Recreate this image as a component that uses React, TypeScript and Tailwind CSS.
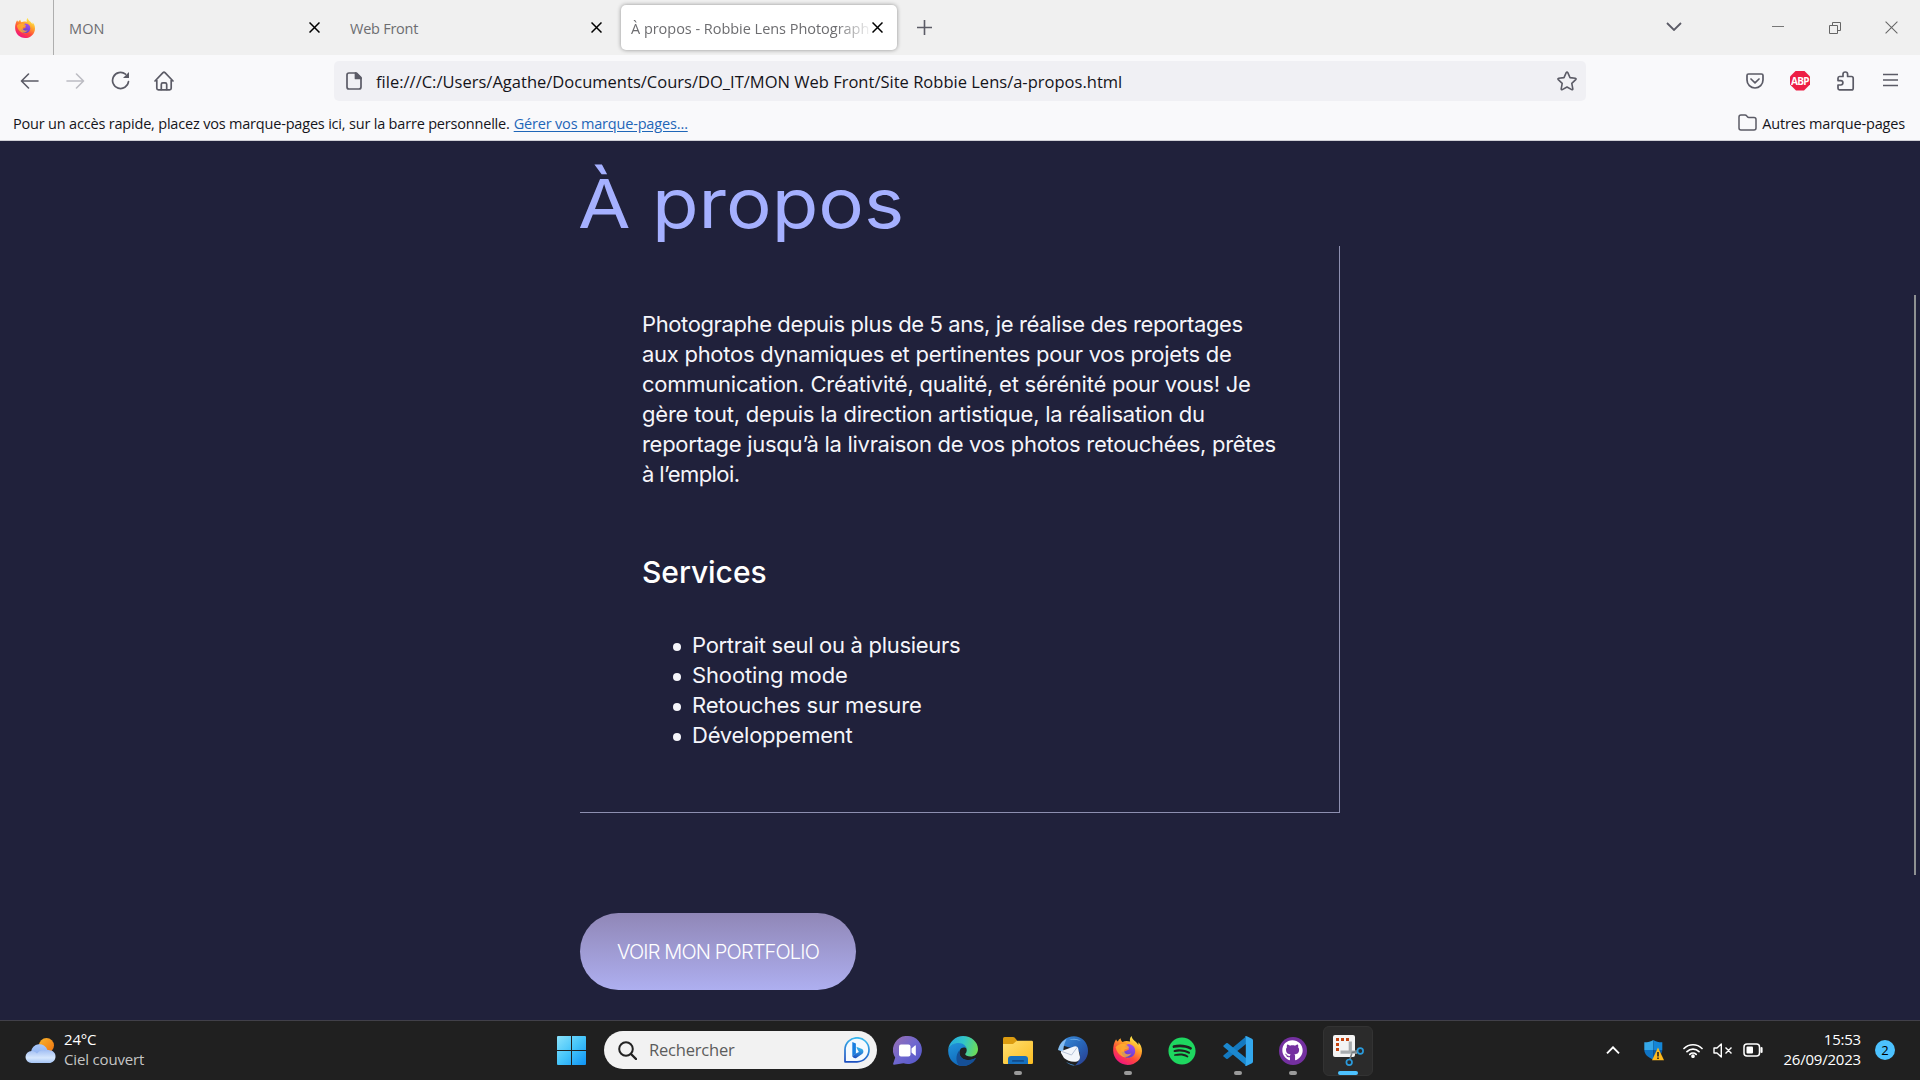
import type { ReactNode } from "react";
import { FaGithub, FaSpotify } from "react-icons/fa";

function Cross({ size = 11, className = "", width = 1.5 }: { size?: number; className?: string; width?: number }) {
  return (
    <svg width={size} height={size} viewBox="0 0 11 11" className={className} fill="none" stroke="currentColor" strokeWidth={width}>
      <path d="M.5.5l10 10M10.500.5l-10 10" />
    </svg>
  );
}

function FirefoxLogo({ size, id }: { size: number; id: string }) {
  return (
    <svg width={size} height={size} viewBox="0 0 32 32">
      <defs>
        <linearGradient id={id + "a"} x1="0.8" y1="0.05" x2="0.25" y2="0.95">
          <stop offset="0" stopColor="#fff44f" />
          <stop offset="0.35" stopColor="#ffa02a" />
          <stop offset="0.65" stopColor="#ff4a3d" />
          <stop offset="1" stopColor="#f0147e" />
        </linearGradient>
        <linearGradient id={id + "b"} x1="0.7" y1="0" x2="0.3" y2="1">
          <stop offset="0" stopColor="#a34ff0" />
          <stop offset="1" stopColor="#5a3bc8" />
        </linearGradient>
      </defs>
      <path
        fill={"url(#" + id + "a)"}
        d="M20.500 0c-1.800 1.700-2.300 4-1.600 6.200-2.800-1-6-.9-8.400.4-1.300-.9-2-2.300-2.100-4C6.900 3.500 6 4.600 5.400 6 4.400 5.600 3.700 4.700 3.400 3.600 1.200 7 0 11.500.2 16.400.5 25.200 7.500 32 16.200 32 25 32 32 25.300 32 16.600c0-4.200-1.600-7.700-4-9.800.2 1.200.1 2.200-.2 3C25.800 5.600 21.200 4.900 20.500 0z"
      />
      <circle cx="16.200" cy="17" r="7.600" fill="#ff7a35" />
      <path fill={"url(#" + id + "b)"} d="M17 8.700c4.600.4 7.700 3.600 7.500 8-.2 4.300-3.700 7.400-8 7.300-4.200-.1-7.300-3.200-7.300-7 3.600 1 5-.4 7.200-1.500 1-.5 1.600-1 1.200-1.700-.7-1.100-3-.4-4.600-1.600 1-1.900 2.300-3 4-3.500z" />
      <path fill="#ffb52e" d="M2.800 12.500c3-3.600 7-4.700 10.800-3.300 1.800.6 2.700 1.800 4.300 3.100-1.500 1.700-3.200 1.700-4.600 2.200-1.400.6-1.300 2.600-.3 4 1.600 2.200 5 2.200 7.500.6-2 3.600-6.200 5.200-10.300 3.500C6 20.800 4 17 2.800 12.500z" opacity="0.75" />
    </svg>
  );
}

function Tabs() {
  return (
    <div className="flex h-[55px] items-center bg-[#f0f0f0] text-[14.5px] leading-5 text-[#6d6d70]">
      <div className="flex h-full w-[54px] items-center border-r border-[#aeaeae] pl-[15px]">
        <FirefoxLogo size={20} id="ft" />
      </div>
      <div className="flex w-[281px] items-center justify-between pl-[15px] pr-[15px]">
        <span className="pt-[3px] tracking-[0.1px]">MON</span>
        <Cross className="text-black" />
      </div>
      <div className="flex w-[286px] items-center justify-between pl-[15px] pr-[19px]">
        <span className="pt-[3px] tracking-[-0.25px]">Web Front</span>
        <Cross className="text-black" />
      </div>
      <div className="flex h-[45px] w-[276px] items-center justify-between rounded-[5px] bg-white pl-[10px] pr-[14px] shadow-[0_0_4px_rgba(0,0,0,0.4)]">
        <span className="w-[238px] overflow-hidden whitespace-nowrap pt-[3px] tracking-[-0.03px] [mask-image:linear-gradient(to_right,black_86%,rgba(0,0,0,0.1))]">
          À propos - Robbie Lens Photograph
        </span>
        <Cross className="text-black" />
      </div>
      <svg className="ml-5" width="15" height="15" fill="none" stroke="#5b5b66" strokeWidth="1.600">
        <path d="M7.500 0v15M0 7.500h15" />
      </svg>
      <svg className="ml-auto mb-[2px]" width="16" height="9" fill="none" stroke="#5b5b66" strokeWidth="1.800">
        <path d="M1 1l7 7 7-7" />
      </svg>
      <div className="ml-[90px] mt-[-2px] h-px w-3 bg-[#777]" />
      <svg className="ml-[45px]" width="12" height="12" fill="none" stroke="#666">
        <path d="M.5 3.500h8v8h-8zM3.500 3.500v-3h8v8h-3" />
      </svg>
      <Cross size={13} width={0.9} className="ml-11 mr-[22px] text-[#666]" />
    </div>
  );
}

function AddressBar() {
  return (
    <div className="flex h-[51px] items-center bg-[#f9f9fb] text-[#5b5b66]">
      <svg className="ml-[20px]" width="19" height="16" fill="none" stroke="currentColor" strokeWidth="1.600" strokeLinecap="round" strokeLinejoin="round">
        <path d="M8.500 1l-7 7 7 7M2 8h16" />
      </svg>
      <svg className="ml-[27px] text-[#bcbcc3]" width="19" height="16" fill="none" stroke="currentColor" strokeWidth="1.600" strokeLinecap="round" strokeLinejoin="round">
        <path d="M10.500 1l7 7-7 7M17 8H1" />
      </svg>
      <svg className="ml-[26px]" width="19" height="19" fill="none" stroke="currentColor" strokeWidth="1.700" strokeLinecap="round">
        <path d="M17.500 10.500A8 8 0 1 1 14.500 3.200" />
        <path d="M18 1v6h-6z" fill="currentColor" stroke="none" />
      </svg>
      <svg className="ml-[24px]" width="20" height="20" fill="none" stroke="currentColor" strokeWidth="1.700" strokeLinecap="round" strokeLinejoin="round">
        <path d="M1 10l8-8.300q1-.9 2 0L19 10M2.800 9v8.200q0 1.600 1.600 1.600h11.200q1.600 0 1.600-1.600V9" />
        <path d="M7.300 18.500v-5q0-1.600 1.500-1.600h2.400q1.500 0 1.500 1.600v5" />
      </svg>
      <div className="ml-[160px] flex h-10 w-[1252px] items-center rounded-[5px] bg-[#f0f0f4] pl-3 pr-[9px]">
        <svg width="16" height="18" fill="none" stroke="currentColor" strokeWidth="1.700" strokeLinejoin="round">
          <path d="M3 1h7.500L15 5.500V15q0 2-2 2H3q-2 0-2-2V3q0-2 2-2z" />
          <path d="M9.500 1v5.500H15z" fill="currentColor" />
        </svg>
        <span className="ml-[14px] whitespace-nowrap pt-[3px] text-[16.5px] leading-5 tracking-[0.01px] text-[#15141a]">
          file:///C:/Users/Agathe/Documents/Cours/DO_IT/MON Web Front/Site Robbie Lens/a-propos.html
        </span>
        <svg className="ml-auto" width="20" height="20" viewBox="0 0 20 20" fill="none" stroke="currentColor" strokeWidth="1.600" strokeLinejoin="round">
          <path d="M9.200 1.700q.8-1.400 1.600 0L13 6.600l5.300.7q1.300.3.4 1.300l-3.900 3.700 1 5.500q.1 1.400-1.100.8L10 16l-4.700 2.600q-1.200.6-1.100-.8l1-5.500-3.900-3.700q-.9-1 .4-1.300L7 6.600z" />
        </svg>
      </div>
      <svg className="ml-40" width="18" height="16" fill="none" stroke="currentColor" strokeWidth="1.700" strokeLinecap="round" strokeLinejoin="round">
        <path d="M2.500 1h13q1.500 0 1.500 1.500V7a8 8 0 0 1-16 0V2.500Q1 1 2.500 1z" />
        <path d="M5 6l4 3.800L13 6" />
      </svg>
      <div className="ml-[26px] flex size-5 items-center justify-center bg-[#ed1e45] font-['Open_Sans'] text-[10px] font-bold leading-none tracking-[-0.6px] text-white [clip-path:polygon(30%_0,70%_0,100%_30%,100%_70%,70%_100%,30%_100%,0_70%,0_30%)]">
        ABP
      </div>
      <svg className="ml-[27px]" width="18" height="20" fill="none" stroke="currentColor" strokeWidth="1.700" strokeLinejoin="round">
        <path d="M2.500 5.500H6V3.300a2.300 2.300 0 0 1 4.600 0v2.200h3.900q1.700 0 1.700 1.700v10q0 1.700-1.700 1.700h-12Q1 18.900 1 17.300V14h2.700a2.200 2.200 0 0 0 0-4.400H1V7.200q0-1.700 1.500-1.700z" />
      </svg>
      <svg className="ml-7 mb-[2px]" width="15" height="14" fill="none" stroke="currentColor" strokeWidth="1.600">
        <path d="M0 1.500h15M0 7h15M0 12.500h15" />
      </svg>
    </div>
  );
}

function BookmarkBar() {
  return (
    <div className="flex h-[35px] items-center border-b border-[#cfcfd6] bg-[#f9f9fb] text-[14.5px] leading-5 text-[#15141a]">
      <span className="ml-[13px] whitespace-nowrap pt-[2px] tracking-[-0.19px]">
        Pour un accès rapide, placez vos marque-pages ici, sur la barre personnelle.
      </span>
      <span className="ml-[4px] whitespace-nowrap pt-[2px] tracking-[-0.18px] text-[#1f66b8] underline underline-offset-2">Gérer vos marque-pages…</span>
      <svg className="ml-auto mb-[2px]" width="19" height="17" fill="none" stroke="#5b5b66" strokeWidth="1.500" strokeLinejoin="round">
        <path d="M3 1h4q1 0 1.600.8l.8 1q.5.6 1.400.6H16q2 0 2 2V14q0 2-2 2H3q-2 0-2-2V3q0-2 2-2z" />
      </svg>
      <span className="ml-[5px] mr-[15px] whitespace-nowrap pt-[2px] tracking-[-0.16px]">Autres marque-pages</span>
    </div>
  );
}

function Service({ children }: { children: ReactNode }) {
  return (
    <li className="flex items-center gap-[11px]">
      <span className="mt-[3px] size-2 rounded-full bg-[#f5f5fa]" />
      {children}
    </li>
  );
}

function Site() {
  return (
    <div className="flex h-[879px] justify-between bg-[#20213b] font-['Inter'] text-[22px] leading-[30px] text-[#f5f5fa]">
      <main className="ml-[580px] w-[760px] pt-5">
        <h1 className="ml-[-2px] h-[85px] origin-left scale-x-[1.12] whitespace-nowrap text-[68px] leading-[84px] text-[#a5b0ff]">À propos</h1>
        <section className="h-[567px] border-b border-r border-[#8d8fb0] pl-[62px] pt-[63px]">
          <p className="whitespace-nowrap">
            <span className="tracking-[-0.39px]">Photographe depuis plus de 5 ans, je réalise des reportages</span>
            <br />
            <span className="tracking-[-0.279px]">aux photos dynamiques et pertinentes pour vos projets de</span>
            <br />
            <span className="tracking-[-0.241px]">communication. Créativité, qualité, et sérénité pour vous! Je</span>
            <br />
            <span className="tracking-[-0.213px]">gère tout, depuis la direction artistique, la réalisation du</span>
            <br />
            <span className="tracking-[-0.301px]">reportage jusqu’à la livraison de vos photos retouchées, prêtes</span>
            <br />
            <span className="tracking-[-0.6px]">à l’emploi.</span>
          </p>
          <h2 className="mt-[63px] text-[30px] font-medium leading-[41px] tracking-[-0.05px] text-white">Services</h2>
          <ul className="mt-[37px] pl-[31px]">
            <Service>
              <span className="tracking-[-0.298px]">Portrait seul ou à plusieurs</span>
            </Service>
            <Service>
              <span className="tracking-[-0.137px]">Shooting mode</span>
            </Service>
            <Service>
              <span className="tracking-[-0.146px]">Retouches sur mesure</span>
            </Service>
            <Service>
              <span className="tracking-[-0.243px]">Développement</span>
            </Service>
          </ul>
        </section>
        <button className="mt-[100px] flex h-[77px] w-[276px] items-center justify-center whitespace-nowrap rounded-full bg-linear-to-b from-[#9087b7] to-[#aeaff0] text-[20px] font-light tracking-[-0.85px] text-white">
          VOIR MON PORTFOLIO
        </button>
      </main>
      <div className="mr-1 mt-[154px] h-[580px] w-[2px] bg-[#8e9192]" />
    </div>
  );
}

function WeatherIcon() {
  return (
    <svg width="31" height="26" viewBox="0 0 31 26">
      <defs>
        <linearGradient id="sun" x1="0" y1="0" x2="1" y2="1">
          <stop offset="0" stopColor="#f9b52c" />
          <stop offset="1" stopColor="#f0710e" />
        </linearGradient>
        <linearGradient id="cloudBack" x1="0" y1="0" x2="0" y2="1">
          <stop offset="0" stopColor="#a9c8fb" />
          <stop offset="1" stopColor="#7ea2e6" />
        </linearGradient>
        <linearGradient id="cloudFront" x1="0" y1="0" x2="0" y2="1">
          <stop offset="0" stopColor="#a3bff3" />
          <stop offset="0.600" stopColor="#d6e7fd" />
          <stop offset="1" stopColor="#a5c4f5" />
        </linearGradient>
      </defs>
      <circle cx="21.500" cy="7.500" r="7.500" fill="url(#sun)" />
      <path fill="url(#cloudBack)" d="M6 14a8.500 8.500 0 0 1 16.500-2 7 7 0 0 1 2 12H7z" />
      <path fill="url(#cloudFront)" d="M6.500 13c3 0 4.500 1.500 5.500 2.500 2-3 5-4 8-3 6-1.500 11 1.500 10.500 6.500-.3 3.500-3 6-6.500 6H6.500A6 6 0 0 1 6.500 13z" />
    </svg>
  );
}

function WindowsIcon() {
  return (
    <svg width="29" height="29" viewBox="0 0 29 29">
      <defs>
        <linearGradient id="win" gradientUnits="userSpaceOnUse" x1="0" y1="0" x2="29" y2="29">
          <stop offset="0" stopColor="#8be3fb" />
          <stop offset="0.500" stopColor="#44c4fa" />
          <stop offset="1" stopColor="#0e93f5" />
        </linearGradient>
      </defs>
      <path fill="url(#win)" d="M1 0h13v14H0V1q0-1 1-1zM15 0h13q1 0 1 1v13H15zM0 15h14v14H1q-1 0-1-1zM15 15h14v13q0 1-1 1H15z" />
    </svg>
  );
}

function BingIcon() {
  return (
    <svg width="26" height="26" viewBox="0 0 26 26">
      <defs>
        <linearGradient id="bing" x1="0.500" y1="0" x2="0.300" y2="1">
          <stop offset="0" stopColor="#39b8ee" />
          <stop offset="1" stopColor="#1c4fc0" />
        </linearGradient>
      </defs>
      <path d="M1 24.800V13A12 12 0 1 1 13 24.800z" fill="#f4faff" stroke="url(#bing)" strokeWidth="1.700" strokeLinejoin="round" />
      <path d="M8.300 5l3.600 1.600v10.200l-3.600 2.600z" fill="#1b7fe0" />
      <path d="M8.300 19.200l3.600-2.600 3-1.600-2-3.500-.5-1.700 5.700 2.200q1.300.8 1.300 2.500t-1.300 2.600L12.300 21q-2.500.8-4-1.800z" fill="url(#bing)" />
    </svg>
  );
}

function ChatIcon() {
  return (
    <svg width="29" height="29" viewBox="0 0 29 29">
      <defs>
        <linearGradient id="chat" x1="0" y1="0" x2="1" y2="1">
          <stop offset="0" stopColor="#9a6fb0" />
          <stop offset="0.500" stopColor="#6f67cf" />
          <stop offset="1" stopColor="#5155c8" />
        </linearGradient>
      </defs>
      <path fill="url(#chat)" d="M15 0a14 14 0 1 1-4.500 27.300L1 28.700q-1.200 0-.8-1.200l2-6A14 14 0 0 1 15 0z" />
      <rect x="6" y="8.500" width="11.500" height="12" rx="2" fill="#fff" />
      <path fill="#fff" d="M18.500 12.500l3.500-3q.8-.5.800.5v9q0 1-.8.5l-3.500-3z" />
    </svg>
  );
}

function EdgeIcon() {
  return (
    <svg width="30" height="30" viewBox="0 0 30 30">
      <defs>
        <linearGradient id="e1" x1="0" y1="0.300" x2="1" y2="0.500">
          <stop offset="0" stopColor="#25a9e0" />
          <stop offset="0.500" stopColor="#32c5c8" />
          <stop offset="1" stopColor="#6cdc58" />
        </linearGradient>
        <linearGradient id="e2" x1="0" y1="0" x2="0.500" y2="1">
          <stop offset="0" stopColor="#2195dc" />
          <stop offset="1" stopColor="#0f66b8" />
        </linearGradient>
      </defs>
      <path fill="url(#e2)" d="M.3 13C3 7.500 7.500 6 12 6.500c4 .4 6.500 3 6.500 6.500-1-2-5-2-6.500 1-2 4.500 1 9.500 7 10 3.500.3 6-.5 8.500-1.500A15 15 0 0 1 15 30C6.500 30-.8 23 .3 13z" />
      <path fill="#154f96" d="M11.600 30C7.500 26.500 7.300 19 11.500 14c-1 5 2 9.600 8 10 3.300.2 5.600-.6 7.800-1.900q.8-.1.400.7C24.500 28 18 31 11.600 30z" />
      <path fill="url(#e1)" d="M.2 13.500C1 6 7.500 0 15 0c8.500 0 15 6.200 15 13 0 5-3.500 7.500-7.500 7.500-3 0-5.300-1-5.300-2.200 0-1 1.500-1.300 1.500-4.300 0-3.700-3.300-7-8.200-7C6 7 1.800 9.500.2 13.500z" />
    </svg>
  );
}

function FolderIcon() {
  return (
    <svg width="30" height="28" viewBox="0 0 30 28">
      <defs>
        <linearGradient id="fold" x1="0" y1="0" x2="1" y2="1">
          <stop offset="0" stopColor="#ffdf70" />
          <stop offset="1" stopColor="#fbbd22" />
        </linearGradient>
      </defs>
      <path fill="#dc9c10" d="M1.500 0H10q1 0 1.800.8L14.500 4v5H0V1.500Q0 0 1.500 0z" />
      <path fill="url(#fold)" d="M0 7h10l3.200-2.700q.6-.5 1.500-.5h14q1.300 0 1.300 1.300v20.600q0 1.300-1.300 1.300H1.300Q0 27 0 25.700z" />
      <path fill="#1670bf" d="M5 27v-5q0-3 3-3h14q3 0 3 3v5z" />
      <rect x="9" y="23" width="12" height="1.800" rx="0.900" fill="#124b8a" />
    </svg>
  );
}

function ThunderbirdIcon() {
  return (
    <svg width="30" height="30" viewBox="0 0 30 30">
      <defs>
        <linearGradient id="tb" x1="0" y1="0" x2="1" y2="1">
          <stop offset="0" stopColor="#3b8ddb" />
          <stop offset="0.500" stopColor="#2866b8" />
          <stop offset="1" stopColor="#2a3a8c" />
        </linearGradient>
      </defs>
      <path fill="url(#tb)" d="M6 4C10 .5 16-.6 21 1.200 27 3.500 30 9 30 15c0 8-6 14-13 14.500C22 25 24 19 20 14L3 9q1-3 3-5z" />
      <path fill="#85bdf0" d="M0 14C1 9 4 4.500 8.500 3 6 8 5 12 5.500 16z" />
      <path fill="#f3f6fb" d="M3.500 15L16 10.500q3-.8 4 1.500l2 9q0 3-3 4.500-8 1-13-3.500l-3-5q-.5-1.500.5-2z" />
      <path fill="none" stroke="#b7c4d8" strokeWidth="1" d="M4 15.500l9.500 3.500L19 11.500" />
      <path fill="#4591d8" d="M8 26q5 2.500 9 3.300-4 .8-9-3.300z" />
      <path fill="#6baae6" d="M11 4q6-3 12 1-7-2-12-1z" />
    </svg>
  );
}

function CodeIcon() {
  return (
    <svg width="30" height="30" viewBox="0 0 30 30">
      <path fill="#1479bf" d="M1.500 21.300l1.700 1.500q.8.500 1.600 0L23 8V0.500L.6 19.300q-.9.900.9 2z" />
      <path fill="#1b88cf" d="M1.500 8.700l1.700-1.500q.8-.5 1.600 0L23 22v7.500L.6 10.700q-.9-.9.9-2z" />
      <path fill="#33a8ee" d="M22 .3q.9-.5 1.800 0l5.200 2.500q1 .5 1 1.600v21.200q0 1.100-1 1.600l-5.200 2.500q-.9.500-1.800 0 .8-.3.800-1.500V1.800q0-1.200-.8-1.500z" />
    </svg>
  );
}

function SnipIcon() {
  return (
    <svg width="31" height="31" viewBox="0 0 31 31">
      <rect width="22" height="22" rx="2" fill="#f4f4f4" />
      <path fill="#c4420f" d="M3 3h3v3H3zM8 3h3v3H8zM13 3h3v3h-3zM3 8h3v3H3zM3 13h3v3H3z" />
      <path fill="none" stroke="#a9adb0" strokeWidth="3.200" d="M17.300 6.500v12M7.500 17.200H24" />
      <path fill="none" stroke="#777c80" strokeWidth="1.600" d="M18.800 18.500l-2 6M18.500 17.500l6.500-1" />
      <circle cx="27.300" cy="16" r="2.800" fill="none" stroke="#2a9bdc" strokeWidth="1.700" />
      <circle cx="16.200" cy="27.300" r="2.800" fill="none" stroke="#2a9bdc" strokeWidth="1.700" />
    </svg>
  );
}

function GithubDesktopIcon() {
  return (
    <span className="flex size-7 items-center justify-center rounded-full bg-[#7430a0] text-white">
      <FaGithub size={21} />
    </span>
  );
}

function TaskbarApp({ children, running = false }: { children: ReactNode; running?: boolean }) {
  return (
    <div className="relative flex h-[59px] w-[55px] items-center justify-center">
      {children}
      {running && <span className="absolute bottom-[5px] left-[24px] h-1 w-2 rounded-full bg-[#9a9a9a]" />}
    </div>
  );
}

function Taskbar() {
  return (
    <div className="flex h-[60px] items-center border-t border-[#414049] bg-[#202020] text-[15px] leading-5 text-white">
      <div className="ml-[25px] flex w-[532px] items-center">
        <WeatherIcon />
        <div className="mb-1 ml-2 flex flex-col whitespace-nowrap">
          <span className="tracking-[-0.2px]">24°C</span>
          <span className="tracking-[-0.16px] text-[#c5c5c5]">Ciel couvert</span>
        </div>
      </div>
      <WindowsIcon />
      <div className="mb-px ml-[18px] mr-[3px] flex h-[38px] w-[273px] items-center rounded-full bg-[#f2f2f2] pl-3.5 pr-[7px]">
        <svg width="19" height="19" fill="none" stroke="#222" strokeWidth="2" strokeLinecap="round">
          <circle cx="8" cy="8" r="6.800" />
          <path d="M13 13l5 5" strokeWidth="2.400" />
        </svg>
        <span className="ml-[12px] text-[16.5px] tracking-[-0.2px] text-[#5c5c5c]">Rechercher</span>
        <span className="ml-auto">
          <BingIcon />
        </span>
      </div>
      <TaskbarApp><ChatIcon /></TaskbarApp>
      <TaskbarApp><EdgeIcon /></TaskbarApp>
      <TaskbarApp running><FolderIcon /></TaskbarApp>
      <TaskbarApp><ThunderbirdIcon /></TaskbarApp>
      <TaskbarApp running><FirefoxLogo size={29} id="fb" /></TaskbarApp>
      <TaskbarApp>
        <FaSpotify size={28} className="mr-px text-[#1ed760]" />
      </TaskbarApp>
      <TaskbarApp running><CodeIcon /></TaskbarApp>
      <TaskbarApp running><GithubDesktopIcon /></TaskbarApp>
      <div className="relative ml-[3px] flex size-[50px] items-center justify-center rounded-md border border-[#333] bg-[#2b2b2b]">
        <SnipIcon />
        <span className="absolute bottom-0 left-[14px] h-1 w-5 rounded-full bg-[#4cc2ff]" />
      </div>

      <svg className="mb-[2px] ml-auto" width="14" height="8" fill="none" stroke="#fff" strokeWidth="1.900">
        <path d="M1 7.300l6-6 6 6" />
      </svg>
      <svg className="ml-6" width="20" height="21" viewBox="0 0 20 21">
        <path fill="#35a7e8" d="M9.300 0C7 1.800 4 2.300.3 2.300V10h9z" />
        <path fill="#1486d6" d="M9.300 0c2.300 1.800 5.300 2.300 9 2.300V10h-9z" />
        <path fill="#0f74c4" d="M.3 10h9v9.500C4 17.500.5 14.500.3 10z" />
        <path fill="#0a5ca8" d="M9.300 10h9c-.2 4.500-3.700 7.500-9 9.500z" />
        <path fill="#fdb91c" d="M14 7.500L20 20.300H8z" />
        <path fill="none" stroke="#222" strokeWidth="1.600" d="M14 12v4.500M14 17.500v1.500" />
      </svg>
      <svg className="mb-px ml-[19px]" width="20" height="15" viewBox="0 0 20 15" fill="none" stroke="#fff" strokeWidth="1.700" strokeLinecap="round">
        <path d="M1 5.500a12.700 12.700 0 0 1 18 0M4 8.700a8.500 8.500 0 0 1 12 0M6.800 11.300a4.700 4.700 0 0 1 6.400 0" />
        <circle cx="10" cy="13.200" r="1" fill="#fff" />
      </svg>
      <svg className="mb-px ml-[10px]" width="20" height="15" fill="none" stroke="#fff" strokeWidth="1.400" strokeLinejoin="round">
        <path d="M1 5h3l4.300-4v13L4 10H1zM12.500 4.500l6 6M18.500 4.500l-6 6" />
      </svg>
      <svg className="mb-px ml-[10px]" width="20" height="14" fill="none" stroke="#fff" strokeWidth="1.500">
        <rect x="1" y="1" width="15.500" height="12" rx="3" />
        <rect x="3.500" y="3.500" width="6.500" height="7" rx="1" fill="#fff" stroke="none" />
        <path d="M18.500 5v4" strokeWidth="2.200" strokeLinecap="round" />
      </svg>
      <div className="mb-1 ml-5 flex w-[78px] flex-col items-end whitespace-nowrap tracking-[-0.2px]">
        <span>15:53</span>
        <span>26/09/2023</span>
      </div>
      <div className="mb-px ml-[14px] mr-[25px] flex size-5 items-center justify-center rounded-full bg-[#4cc2ff] text-[13px] text-black">2</div>
    </div>
  );
}

export default function App() {
  return (
    <div className="flex h-[1080px] w-[1920px] flex-col overflow-hidden font-['Open_Sans',sans-serif]">
      <Tabs />
      <AddressBar />
      <BookmarkBar />
      <Site />
      <Taskbar />
    </div>
  );
}
